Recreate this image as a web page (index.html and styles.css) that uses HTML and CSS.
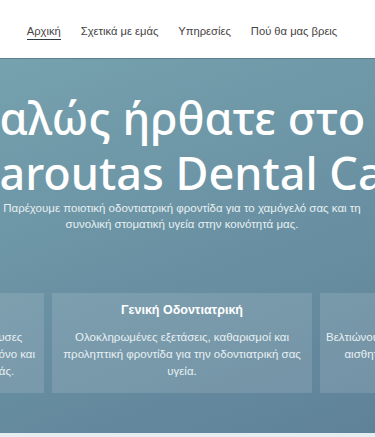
FILE: index.html
```html
<!DOCTYPE html>
<html lang="el">
<head>
    <meta charset="UTF-8">
    <meta name="viewport" content="width=device-width, initial-scale=1.0">
    <title>Karoutas Dental Care</title>
    <link rel="stylesheet" href="styles.css">
</head>
<body>

<header class="site-header">
    <nav class="main-nav">
        <a href="#" class="nav-link active">Αρχική</a>
        <a href="#" class="nav-link">Σχετικά με εμάς</a>
        <a href="#" class="nav-link">Υπηρεσίες</a>
        <a href="#" class="nav-link">Πού θα μας βρεις</a>
    </nav>
</header>

<section class="hero">
    <h1 class="hero-title">Καλώς ήρθατε στο<br>Karoutas Dental Care</h1>
    <p class="hero-text">Παρέχουμε ποιοτική οδοντιατρική φροντίδα για το χαμόγελό σας και τη<br>συνολική στοματική υγεία στην κοινότητά μας.</p>

    <div class="services">
        <div class="service">
            <h3>Ορθοδοντική</h3>
            <p>Θεραπείες σύμφωνα με τις νέες ισχύουσες<br>προδιαγραφές ασφαλείας, με λιγότερο πόνο και<br>πολύ καλύτερα αποτελέσματα για εσάς.</p>
        </div>
        <div class="service">
            <h3>Γενική Οδοντιατρική</h3>
            <p>Ολοκληρωμένες εξετάσεις, καθαρισμοί και<br>προληπτική φροντίδα για την οδοντιατρική σας<br>υγεία.</p>
        </div>
        <div class="service">
            <h3>Αισθητική Οδοντιατρική</h3>
            <p>Βελτιώνουμε την εμφάνιση του χαμόγελού σας με<br>αισθητικές θεραπείες, λεύκανση και όψεις.</p>
        </div>
    </div>
</section>

<div class="page-end"></div>

</body>
</html>
```

FILE: styles.css
```css
body {
    font-family: "Liberation Sans", Arial, sans-serif;
    margin: 0;
    padding: 0;
    overflow: hidden;
}

.site-header {
    background-color: #fff;
    height: 58px;
    box-sizing: border-box;
    padding: 6px 11px 0 0;
    display: flex;
    justify-content: center;
    align-items: center;
}

.main-nav {
    display: flex;
    gap: 20px;
}

.nav-link {
    color: #444;
    text-decoration: none;
    font-size: 11.2px;
    white-space: nowrap;
    padding-bottom: 2px;
}

.nav-link.active {
    border-bottom: 1.5px solid #2f3a40;
}

.hero {
    background: linear-gradient(160deg, #76a1ae 0%, #6b93a4 45%, #5f8299 100%);
    border-top: 1px solid #5d7f8c;
    height: 374px;
    padding-right: 11px;
    display: flex;
    flex-direction: column;
    align-items: center;
    color: #fff;
}

.hero-title {
    align-self: flex-start;
    margin: 31px 0 0 -29px;
    font-family: "Noto Sans", "Open Sans", sans-serif;
    font-size: 45px;
    font-weight: 500;
    line-height: 55px;
    white-space: nowrap;
}

.hero-text {
    margin: 0;
    font-size: 11.5px;
    line-height: 16px;
    color: #e8f0f3;
    white-space: nowrap;
    text-align: center;
}

.services {
    display: flex;
    flex-shrink: 0;
    width: 796px;
    gap: 8px;
    margin-top: 61px;
}

.service {
    flex: 0 0 260px;
    height: 100px;
    box-sizing: border-box;
    padding: 8px 6px;
    background-color: rgba(255, 255, 255, 0.12);
    text-align: center;
}

.service h3 {
    margin: 0;
    font-size: 12.5px;
    font-weight: bold;
    line-height: 18px;
}

.service p {
    margin: 10px 0 0;
    font-size: 11.5px;
    line-height: 17px;
    color: #e8f0f3;
    white-space: nowrap;
}

.page-end {
    height: 4px;
    background-color: #e6edf0;
}
```
